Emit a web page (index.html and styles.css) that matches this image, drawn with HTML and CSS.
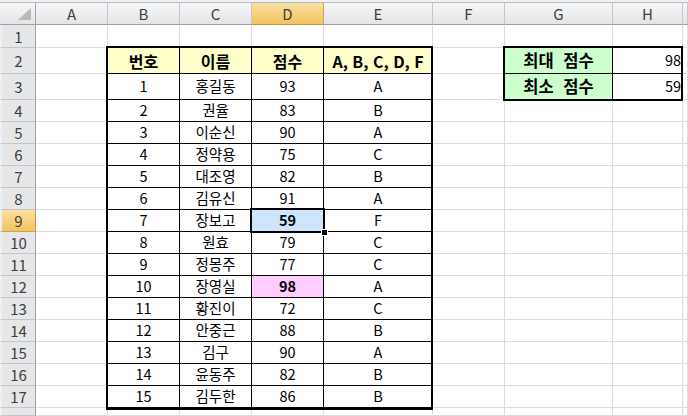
FILE: index.html
```html
<!DOCTYPE html>
<html lang="ko">
<head>
<meta charset="utf-8">
<title>Sheet</title>
<link rel="stylesheet" href="styles.css">
</head>
<body>
<div class="topstrip"></div>
<div class="wrap">
<div class="sheet layout">
  <div class="ch corner"><svg class="tri" width="14" height="13" viewBox="0 0 14 13"><polygon points="13,0 13,12 0,12" fill="#b9b9b9"/></svg></div>
  <div class="ch">A</div><div class="ch">B</div><div class="ch">C</div><div class="ch on">D</div><div class="ch">E</div><div class="ch">F</div><div class="ch">G</div><div class="ch">H</div><div class="ch"></div>

  <div class="rh">1</div><div class="c"></div><div class="c"></div><div class="c"></div><div class="c"></div><div class="c"></div><div class="c"></div><div class="c"></div><div class="c"></div><div class="c"></div>

  <div class="rh">2</div><div class="c"></div><div class="c t th">번호</div><div class="c t th">이름</div><div class="c t th">점수</div><div class="c t th">A, B, C, D, F</div><div class="c"></div><div class="c g">최대 점수</div><div class="c v">98</div><div class="c"></div>

  <div class="rh">3</div><div class="c"></div><div class="c t">1</div><div class="c t">홍길동</div><div class="c t">93</div><div class="c t">A</div><div class="c"></div><div class="c g">최소 점수</div><div class="c v">59</div><div class="c"></div>

  <div class="rh">4</div><div class="c"></div><div class="c t">2</div><div class="c t">권율</div><div class="c t">83</div><div class="c t">B</div><div class="c"></div><div class="c"></div><div class="c"></div><div class="c"></div>

  <div class="rh">5</div><div class="c"></div><div class="c t">3</div><div class="c t">이순신</div><div class="c t">90</div><div class="c t">A</div><div class="c"></div><div class="c"></div><div class="c"></div><div class="c"></div>

  <div class="rh">6</div><div class="c"></div><div class="c t">4</div><div class="c t">정약용</div><div class="c t">75</div><div class="c t">C</div><div class="c"></div><div class="c"></div><div class="c"></div><div class="c"></div>

  <div class="rh">7</div><div class="c"></div><div class="c t">5</div><div class="c t">대조영</div><div class="c t">82</div><div class="c t">B</div><div class="c"></div><div class="c"></div><div class="c"></div><div class="c"></div>

  <div class="rh">8</div><div class="c"></div><div class="c t">6</div><div class="c t">김유신</div><div class="c t">91</div><div class="c t">A</div><div class="c"></div><div class="c"></div><div class="c"></div><div class="c"></div>

  <div class="rh on">9</div><div class="c"></div><div class="c t">7</div><div class="c t">장보고</div><div class="c t blue">59</div><div class="c t">F</div><div class="c"></div><div class="c"></div><div class="c"></div><div class="c"></div>

  <div class="rh">10</div><div class="c"></div><div class="c t">8</div><div class="c t">원효</div><div class="c t">79</div><div class="c t">C</div><div class="c"></div><div class="c"></div><div class="c"></div><div class="c"></div>

  <div class="rh">11</div><div class="c"></div><div class="c t">9</div><div class="c t">정몽주</div><div class="c t">77</div><div class="c t">C</div><div class="c"></div><div class="c"></div><div class="c"></div><div class="c"></div>

  <div class="rh">12</div><div class="c"></div><div class="c t">10</div><div class="c t">장영실</div><div class="c t pink">98</div><div class="c t">A</div><div class="c"></div><div class="c"></div><div class="c"></div><div class="c"></div>

  <div class="rh">13</div><div class="c"></div><div class="c t">11</div><div class="c t">황진이</div><div class="c t">72</div><div class="c t">C</div><div class="c"></div><div class="c"></div><div class="c"></div><div class="c"></div>

  <div class="rh">14</div><div class="c"></div><div class="c t">12</div><div class="c t">안중근</div><div class="c t">88</div><div class="c t">B</div><div class="c"></div><div class="c"></div><div class="c"></div><div class="c"></div>

  <div class="rh">15</div><div class="c"></div><div class="c t">13</div><div class="c t">김구</div><div class="c t">90</div><div class="c t">A</div><div class="c"></div><div class="c"></div><div class="c"></div><div class="c"></div>

  <div class="rh">16</div><div class="c"></div><div class="c t">14</div><div class="c t">윤동주</div><div class="c t">82</div><div class="c t">B</div><div class="c"></div><div class="c"></div><div class="c"></div><div class="c"></div>

  <div class="rh">17</div><div class="c"></div><div class="c t">15</div><div class="c t">김두한</div><div class="c t">86</div><div class="c t">B</div><div class="c"></div><div class="c"></div><div class="c"></div><div class="c"></div>

  <div class="rh"></div><div class="c"></div><div class="c"></div><div class="c"></div><div class="c"></div><div class="c"></div><div class="c"></div><div class="c"></div><div class="c"></div><div class="c"></div>
</div>
<div class="overlay layout">
  <div class="frame frame-main"></div>
  <div class="frame frame-minmax"></div>
  <div class="sel"><span class="handle"></span></div>
</div>
</div>
</body>
</html>
```

FILE: styles.css
```css
html, body {
  margin: 0;
  padding: 0;
}
body {
  width: 688px;
  height: 416px;
  overflow: hidden;
  background: #ffffff;
  font-family: "Noto Sans CJK KR", "Noto Sans", sans-serif;
}
.topstrip {
  height: 2px;
  background: #f1f2f4;
}
.wrap {
  display: grid;
  height: 414px;
}
.wrap > .layout {
  grid-area: 1 / 1;
}
.layout {
  display: grid;
  grid-template-columns: 36px 72px 72px 72px 72px 109px 72px 108px 70px 1fr;
  grid-template-rows: 23px 23px 26px 26px repeat(14, 22px) 1fr;
  height: 414px;
}
.overlay {
  pointer-events: none;
}
.c {
  box-sizing: border-box;
  border-right: 1px solid #dadcdd;
  border-bottom: 1px solid #dadcdd;
  display: flex;
  align-items: center;
  justify-content: center;
  font-size: 14.5px;
  line-height: 1;
  color: #000;
  white-space: nowrap;
  overflow: hidden;
}
.ch {
  box-sizing: border-box;
  display: flex;
  align-items: center;
  justify-content: center;
  background: linear-gradient(#f6f7f8, #e3e4e6);
  border-top: 1px solid #b8babd;
  border-right: 1px solid #c3c5c8;
  border-bottom: 1px solid #9ea2a7;
  color: #3e3e3e;
  font-size: 15px;
  line-height: 1;
}
.ch.corner {
  justify-content: flex-end;
  align-items: flex-end;
  padding: 0 3px 3px 0;
  border-right-color: #9ea2a7;
}
.ch.on {
  background: linear-gradient(#fae0a2, #f2c45f);
  border-right-color: #c9a452;
  border-bottom-color: #c29543;
}
.rh {
  box-sizing: border-box;
  display: flex;
  align-items: center;
  justify-content: center;
  background: #e6e7e9;
  border-left: 2px solid #eeeff1;
  border-right: 1px solid #9ea2a7;
  border-bottom: 1px solid #c3c5c8;
  color: #3e3e3e;
  font-size: 15px;
  line-height: 1;
}
.rh.on {
  background: linear-gradient(#fae0a2, #f2c45f);
  border-right-color: #c29543;
  border-bottom-color: #c9a452;
}
.t {
  border-right-color: #000;
  border-bottom-color: #000;
}
.th {
  background: #ffffcc;
  font-weight: bold;
  font-size: 16px;
}
.g {
  background: #ccffcc;
  font-weight: bold;
  font-size: 16.5px;
  word-spacing: 5px;
  border-right-color: #000;
  border-bottom-color: #000;
}
.v {
  justify-content: flex-end;
  padding-right: 1px;
  border-bottom-color: #000;
}
.blue {
  background: #cde6fb;
  font-weight: bold;
}
.pink {
  background: #ffccff;
  font-weight: bold;
}
.frame {
  border: 2px solid #000;
}
.frame-main {
  grid-column: 3 / 7;
  grid-row: 3 / 19;
  margin: -2px 0 -2px -2px;
}
.frame-minmax {
  grid-column: 8 / 10;
  grid-row: 3 / 5;
  margin: -2px 0 -1px -2px;
}
.sel {
  position: relative;
  grid-column: 5 / 6;
  grid-row: 10 / 11;
  margin: -2px -1px -1px -2px;
  border: 2px solid #000;
}
.handle {
  position: absolute;
  right: -5px;
  bottom: -5px;
  width: 5px;
  height: 5px;
  background: #000;
  border: 1px solid #fff;
}
```
